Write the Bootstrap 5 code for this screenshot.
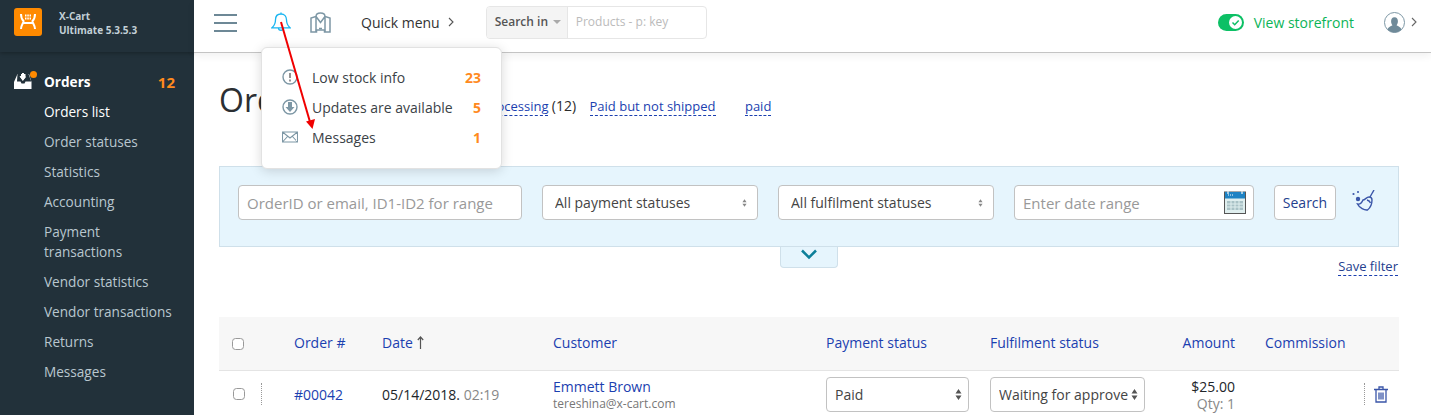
<!DOCTYPE html>
<html lang="en">
<head>
  <meta charset="UTF-8">
  <title>Orders</title>
  <link href="https://cdn.jsdelivr.net/npm/bootstrap@5.3.0/dist/css/bootstrap.min.css" rel="stylesheet">
  <script src="https://cdn.jsdelivr.net/npm/bootstrap@5.3.0/dist/js/bootstrap.bundle.min.js"></script>
  <style>
    html, body { height: 415px; overflow: hidden; }
    body { font-family: "Open Sans", sans-serif; font-size: 14px; color: #2b2b2b; background: #fff; }

    .side-col { width: 194px; flex: none; height: 415px; background: #22313a; }
    .side-head { height: 52px; padding: 8px 0 0 14px; background: #22313a; box-shadow: 0 1px 4px rgba(0,0,0,.3); }
    .side-logo { width: 28px; height: 28px; border-radius: 3px; background: #ff8a00; }
    .side-brand { margin-left: 17px; margin-top: 1px; color: #c3d0d7; font-size: 10px; font-weight: 700; line-height: 14px; }
    .side-menu { padding-top: 15px; }
    .side-link { display: block; padding: 5px 0 5px 44px; line-height: 20px; font-size: 13.6px; color: #b9c7cf; text-decoration: none; width: 173px; }
    .side-link.on { color: #fff; }
    .side-top { position: relative; color: #fff; font-weight: 700; width: 194px; padding-right: 19px; }
    .side-ico { position: absolute; left: 14px; top: 4px; }
    .side-num { color: #ff8a1e; font-weight: 700; font-size: 15px; }

    .main-col { min-width: 0; }
    .top-strip { height: 53px; border-bottom: 1px solid #c4c4c4; box-shadow: 0 3px 8px rgba(0,0,0,.06); background: #fff; padding: 0 14px 8px 20px; }
    .bell-ico { margin-left: 34px; }
    .coat-ico { margin-left: 19px; }
    .quick-txt { margin-left: 30px; font-size: 14px; color: #333; }
    .find-box { margin-left: 32px; width: 221px; height: 33px; border: 1px solid #e6e6e6; border-radius: 4px; font-size: 12px; overflow: hidden; }
    .find-in { width: 81px; background: #f4f4f4; border-right: 1px solid #e6e6e6; padding-left: 8px; font-weight: 600; color: #555; }
    .find-caret { display: inline-block; margin-left: 5px; border: 4px solid transparent; border-top-color: #aaa; border-bottom: 0; vertical-align: middle; }
    .find-ph { padding-left: 8px; color: #bbb; }
    .store-link { color: #0cb458; font-size: 14px; text-decoration: none; margin-left: 10px; margin-right: 30px; }
    .store-tog { width: 26px; height: 17px; border-radius: 9px; background: #0cc065; position: relative; }
    .store-knob { position: absolute; right: 2px; top: 2px; width: 13px; height: 13px; border-radius: 50%; background: #fff; line-height: 0; }
    .user-chev { margin-left: 6px; }

    .title-row { padding: 25px 0 0 25px; height: 113px; }
    .page-ttl { font-size: 32px; font-weight: 400; line-height: 44px; margin: 0; color: #2b2f33; width: 209px; }
    .tab-row { padding-top: 17px; font-size: 13px; }
    .tab-lnk { color: #1b3fb0; text-decoration: none; border-bottom: 1px dashed #1b3fb0; line-height: 17px; }
    .tab-count { font-size: 14px; }
    .tab-second { margin-left: 10px; }
    .tab-third { margin-left: 26px; }

    .filter-box { margin-left: 25px; width: 1180px; height: 81px; background: #e6f5fd; border: 1px solid #cfe0ea; padding: 18px; gap: 20px; position: relative; }
    .filter-box .form-control, .filter-box .form-select, .row-sel { height: 35px; border: 1px solid #c2c2c2; border-radius: 4px; box-shadow: none; color: #444; }
    .filter-box .form-control { font-size: 15px; padding-left: 8px; }
    .filter-box .form-select { font-size: 14px; }
    .filter-box .form-control::placeholder { color: #999; }
    .filter-box .form-select { padding-left: 12px; background-image: url("data:image/svg+xml,%3Csvg xmlns='http://www.w3.org/2000/svg' viewBox='0 0 6 9'%3E%3Cpath d='M3 0l2.500 3.500h-5zM3 9L.5 5.500h5z' fill='%23888'/%3E%3C/svg%3E"); background-size: 5px 8px; background-position: right 10px center; }
    .f-id { width: 284px; flex: none; }
    .f-sel { width: 216px; flex: none; }
    .f-date { width: 240px; flex: none; position: relative; }
    .f-cal { position: absolute; right: 8px; top: 5px; }
    .go-btn { width: 62px; height: 35px; padding: 0; background: #fff; border: 1px solid #c2c2c2; border-radius: 4px; font-size: 14px; color: #24408e; }
    .broom-ico { margin-left: -4px; margin-top: 5px; flex: none; }
    .more-tab { position: absolute; left: 560px; top: 80px; width: 58px; height: 21px; background: #e6f5fd; border: 1px solid #cfe0ea; border-top: 0; border-radius: 0 0 4px 4px; }
    .more-tab svg { display: block; margin: 2px auto 0; }
    .save-row { margin-left: 25px; width: 1179px; height: 70px; padding-top: 10px; text-align: right; font-size: 13px; }
    .save-row a { color: #24408e; }

    .ord-table { margin: 0 0 0 25px; width: 1180px; table-layout: fixed; font-size: 14px; }
    .ord-table th { background: #f7f7f7; height: 53px; font-weight: 400; vertical-align: middle; border-bottom: 1px solid #e4e4e4; padding: 0 0 2px; }
    .ord-table td { padding: 0; height: 48px; vertical-align: middle; border: 0; line-height: 17px; }
    .ord-table a { color: #1b3fb0; text-decoration: none; }
    .chk-box { margin: 0 !important; width: 12px; height: 12px; border: 1px solid #999; border-radius: 2px; background-color: #fff; box-shadow: none; vertical-align: middle; }
    .chk-row { margin-left: 1px !important; }
    .ord-table .c-chk { padding-left: 13px; }
    .sort-up { margin-left: 2px; vertical-align: -1px; }
    .dots { display: inline-block; height: 22px; border-left: 1px dotted #999; vertical-align: middle; }
    .grey-txt { color: #888; }
    .mail-txt { color: #777; font-size: 12px; display: block; }
    .ord-table .two-line { padding-top: 2px; }
    .row-sel { width: 143px; height: 35px; padding: 0 20px 0 8px; font-size: 14px; background-image: url("data:image/svg+xml,%3Csvg xmlns='http://www.w3.org/2000/svg' viewBox='0 0 7 11'%3E%3Cpath d='M3.500 0l3 4.500h-6zM3.500 11l-3-4.500h6z' fill='%23555'/%3E%3C/svg%3E"); background-position: right 6px center; background-size: 7px 11px; }
    .row-sel.sel-narrow { width: 155px; padding-right: 0; }
    .ord-table .amt-cell { text-align: right; padding-right: 30px; }
    .trash-ico { margin: 0 11px 0 9px; }

    .pop-menu { position: absolute; left: 261px; top: 47px; width: 241px; height: 122px; border: 1px solid #e2e2e2; border-radius: 6px; background: #fff; box-shadow: 0 2px 12px rgba(0,0,0,.15); padding: 14px 20px 0 20px; }
    .pop-row { height: 30px; color: #3b4247; }
    .pop-row svg { margin-right: 14px; flex: none; }
    .pop-num { margin-left: auto; color: #ff8a1e; font-weight: 700; }
    .arrow-svg { position: absolute; left: 0; top: 0; pointer-events: none; }
  </style>
</head>
<body>
  <div class="d-flex">
    <div class="side-col">
      <div class="side-head d-flex">
        <div class="side-logo d-flex align-items-center justify-content-center">
          <svg width="20" height="20" viewBox="0 0 20 20" fill="none" stroke="#fff" stroke-width="2"><path d="M3 2c0 4 .5 5 2.500 7 0 0 0 1-.5 2-1 2-2 3-2 6M17 2c0 4-.5 5-2.500 7 0 0 0 1 .5 2 1 2 2 3 2 6M5 11h10"/><path d="M7 3.500h6M7 6.500h6" stroke-dasharray="1.500 .8" stroke-width="1.800"/></svg>
        </div>
        <div class="side-brand">X-Cart<br>Ultimate 5.3.5.3</div>
      </div>
      <div class="side-menu nav flex-column">
        <a class="side-link side-top d-flex justify-content-between" href="#">
          <svg class="side-ico" width="24" height="20" viewBox="0 0 24 20"><path d="M0 11L3.500 3H15l2.500 8v7H0z" fill="#fff"/><path d="M3 10.500h3.500l1 2h3l1-2H17V9.800L14.500 3h-3v2H12L8.800 10 5.500 5H7V3H3.500z" fill="#22313a"/><path d="M8 2h2v4h2L9 9.500 6 6h2z" fill="#fff"/><circle cx="19.500" cy="3.500" r="3.500" fill="#ff8a00"/></svg>
          <span>Orders</span><span class="side-num">12</span>
        </a>
        <a class="side-link on" href="#">Orders list</a>
        <a class="side-link" href="#">Order statuses</a>
        <a class="side-link" href="#">Statistics</a>
        <a class="side-link" href="#">Accounting</a>
        <a class="side-link" href="#">Payment transactions</a>
        <a class="side-link" href="#">Vendor statistics</a>
        <a class="side-link" href="#">Vendor transactions</a>
        <a class="side-link" href="#">Returns</a>
        <a class="side-link" href="#">Messages</a>
      </div>
    </div>

    <div class="main-col flex-grow-1">
      <div class="top-strip d-flex align-items-center">
        <svg width="23" height="19" viewBox="0 0 23 19" stroke="#6d8896" stroke-width="2"><path d="M0 2h23M0 10h23M0 18h23"/></svg>
        <svg class="bell-ico" width="20" height="21" viewBox="0 0 20 21" fill="none" stroke="#19b5f1" stroke-width="1.300"><path d="M10 2c-3.500 0-5.500 2.500-5.500 5.800 0 4-1.300 6-3.500 8h18c-2.200-2-3.500-4-3.500-8C15.500 4.500 13.500 2 10 2zM10 .5V2"/><path d="M7.500 16c0 3 5 3 5 0"/></svg>
        <svg class="coat-ico" width="21" height="21" viewBox="0 0 21 21" fill="none" stroke="#7d97a5" stroke-width="1.500"><path d="M6 4.500C6 2 8 1 10.500 1S15 2 15 4.500l5 1.500v14h-5.500v-2h-8v2H1V6z"/><path d="M6 4.500V20M15 4.500V20M6 4.500l4.500 6 4.500-6M9 16.500h3"/></svg>
        <span class="quick-txt">Quick menu</span>
        <svg class="ms-2" width="6" height="10" viewBox="0 0 6 10" fill="none" stroke="#555" stroke-width="1.100"><path d="M1 1l4 4-4 4"/></svg>
        <div class="find-box d-flex">
          <div class="find-in d-flex align-items-center">Search in<span class="find-caret"></span></div>
          <div class="find-ph d-flex align-items-center">Products - p: key</div>
        </div>
        <div class="ms-auto d-flex align-items-center">
          <div class="store-tog"><span class="store-knob"><svg width="13" height="13" viewBox="0 0 13 13" fill="none" stroke="#0cc065" stroke-width="1.500"><path d="M3.500 6.500l2.200 2.200 4-4.200"/></svg></span></div>
          <a class="store-link" href="#">View storefront</a>
          <svg width="21" height="21" viewBox="0 0 21 21"><circle cx="10.500" cy="10.500" r="10" fill="#fff" stroke="#7d97a5"/><path d="M3.500 17.500c1-3 3.500-3.300 5-4.300-2-2-2.300-8 2-8s4 6 2 8c1.500 1 4 1.300 5 4.300-3.500 4-10.500 4-14 0z" fill="#6f8a99"/></svg>
          <svg class="user-chev" width="6" height="10" viewBox="0 0 6 10" fill="none" stroke="#666" stroke-width="1.100"><path d="M1 1l4 4-4 4"/></svg>
        </div>
      </div>

      <div class="title-row d-flex">
        <h1 class="page-ttl">Orders</h1>
        <div class="tab-row text-nowrap">
          <a class="tab-lnk" href="#">Awaiting processing</a> <span class="tab-count">(12)</span>
          <a class="tab-lnk tab-second" href="#">Paid but not shipped</a>
          <a class="tab-lnk tab-third" href="#">paid</a>
        </div>
      </div>

      <div class="filter-box d-flex">
        <input class="form-control f-id" placeholder="OrderID or email, ID1-ID2 for range">
        <select class="form-select f-sel"><option>All payment statuses</option></select>
        <select class="form-select f-sel"><option>All fulfilment statuses</option></select>
        <div class="f-date">
          <input class="form-control" placeholder="Enter date range">
          <svg class="f-cal" width="22" height="24" viewBox="0 0 22 24"><rect x="0.500" y="2" width="21" height="21.500" fill="#dfeeee" stroke="#555"/><rect x="1" y="2" width="20" height="6.500" fill="#1f83c4"/><path d="M4 5h6" stroke="#fff" stroke-dasharray="1 1"/><path d="M4 1v3M18 1v3" stroke="#cfe3ee" stroke-width="1.500"/><path d="M3 11h16v9H3z" fill="#a9c2c6"/><path d="M3 14h16M3 17h16M7 11v9M11 11v9M15 11v9" stroke="#dfeeee"/></svg>
        </div>
        <button class="btn go-btn">Search</button>
        <svg class="broom-ico" width="23" height="22" viewBox="0 0 23 22" fill="none" stroke="#3a55a8" stroke-width="1.400"><path d="M22 0l-4 7"/><path d="M11 10c2 0 3.500-3 6-3 2 0 3 1.500 3 3 0 4-2 8-4.500 10-3 .5-8-2-10-6 2 .5 4-.5 5.500-4z"/><path d="M15 10c2 .5 3 1.500 3.500 3"/><circle cx="6" cy="9" r="2.200" fill="#3a55a8" stroke="none"/><circle cx="1.500" cy="4" r="1.100" fill="#3a55a8" stroke="none"/><circle cx="6" cy="2" r="1" fill="#3a55a8" stroke="none"/></svg>
        <div class="more-tab">
          <svg width="16" height="11" viewBox="0 0 16 11" fill="none" stroke="#0d7f99" stroke-width="2.500"><path d="M1 1.500l7 7 7-7"/></svg>
        </div>
      </div>

      <div class="save-row"><a class="tab-lnk" href="#">Save filter</a></div>

      <table class="table ord-table">
        <colgroup>
          <col style="width:75px"><col style="width:88px"><col style="width:171px"><col style="width:273px">
          <col style="width:164px"><col style="width:164px"><col style="width:111px"><col style="width:134px">
        </colgroup>
        <thead>
          <tr>
            <th class="c-chk"><input class="form-check-input chk-box" type="checkbox"></th>
            <th><a href="#">Order #</a></th>
            <th><a href="#">Date</a><svg class="sort-up ms-1" width="7" height="13" viewBox="0 0 7 13" fill="none" stroke="#555" stroke-width="1.200"><path d="M3.500 13V1M.8 4l2.700-3 2.700 3"/></svg></th>
            <th><a href="#">Customer</a></th>
            <th><a href="#">Payment status</a></th>
            <th><a href="#">Fulfilment status</a></th>
            <th class="amt-cell"><a href="#">Amount</a></th>
            <th><a href="#">Commission</a></th>
          </tr>
        </thead>
        <tbody>
          <tr>
            <td class="c-chk"><input class="form-check-input chk-box chk-row" type="checkbox"><span class="dots ms-3"></span></td>
            <td><a href="#">#00042</a></td>
            <td>05/14/2018. <span class="grey-txt">02:19</span></td>
            <td class="two-line"><a href="#">Emmett Brown</a><span class="mail-txt">tereshina@x-cart.com</span></td>
            <td><select class="form-select row-sel"><option>Paid</option></select></td>
            <td><select class="form-select row-sel sel-narrow"><option>Waiting for approve</option></select></td>
            <td class="amt-cell two-line">$25.00<br><span class="grey-txt">Qty: 1</span></td>
            <td class="text-end">
              <span class="dots"></span><svg class="trash-ico" width="14" height="17" viewBox="0 0 14 17" fill="none" stroke="#3a55a8" stroke-width="1.300"><path d="M0 3.500h14M5 3V1h4v2M2 4v12h10V4M5 6.500v7M7 6.500v7M9 6.500v7"/></svg>
            </td>
          </tr>
        </tbody>
      </table>
    </div>
  </div>

  <div class="pop-menu">
    <div class="pop-row d-flex align-items-center">
      <svg width="16" height="16" viewBox="0 0 16 16" fill="none" stroke="#7d97a5" stroke-width="1.400"><circle cx="8" cy="8" r="7"/><path d="M8 4v5M8 10.500v2" stroke="#666"/></svg>
      Low stock info<span class="pop-num">23</span>
    </div>
    <div class="pop-row d-flex align-items-center">
      <svg width="16" height="16" viewBox="0 0 16 16" fill="none" stroke="#7d97a5" stroke-width="1.400"><circle cx="8" cy="8" r="7"/><path d="M6 3h4v5h2.500L8 13 3.500 8H6z" fill="#7d97a5" stroke="none"/></svg>
      Updates are available<span class="pop-num">5</span>
    </div>
    <div class="pop-row d-flex align-items-center">
      <svg width="16" height="16" viewBox="0 0 16 16" fill="none" stroke="#7d97a5" stroke-width="1.100"><path d="M.5 3h15v10H.5zM.5 3L8 9l7.500-6M.5 13l5.500-6M15.500 13L10 7"/></svg>
      Messages<span class="pop-num">1</span>
    </div>
  </div>

  <svg class="arrow-svg" width="1431" height="415" viewBox="0 0 1431 415">
    <path d="M281 22L310 122" stroke="#f00000" stroke-width="2" fill="none"/>
    <path d="M306 121.500l9-2.500-2.500 10z" fill="#f00000"/>
  </svg>
</body>
</html>
